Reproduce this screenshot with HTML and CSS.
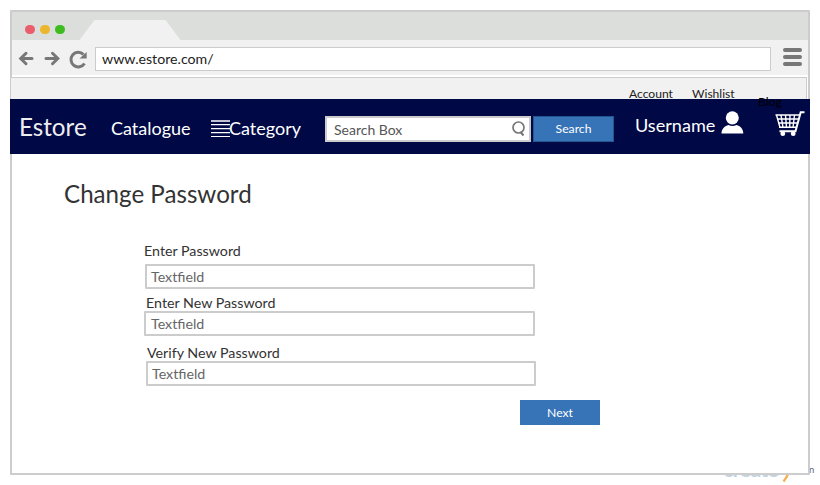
FILE: index.html
```html
<!DOCTYPE html>
<html lang="en">
<head>
<meta charset="utf-8">
<title>Estore - Change Password</title>
<link rel="stylesheet" href="styles.css">
</head>
<body>
<div class="watermark"><span class="mark-blue">create</span><svg class="mark-tail" width="10" height="9" viewBox="0 0 10 9"><path d="M7.500 0Q5.500 5 2.500 8.500" fill="none" stroke="#f9b054" stroke-width="2.400"/></svg></div>
<div class="watermark-domain">n</div>
<div class="window">
  <div class="titlebar">
    <div class="dots"><i class="dot red"></i><i class="dot amber"></i><i class="dot green"></i></div>
    <div class="tab"></div>
  </div>
  <div class="toolbar">
    <svg class="tools" width="72" height="24" viewBox="0 0 72 24" fill="none" stroke="#777" stroke-width="3">
      <path d="M3 11.500H14M8 6.300L2.700 11.500L8 16.700" stroke-linecap="round"/>
      <path d="M28 11.500H39M34.500 6.300L39.800 11.500L34.500 16.700" stroke-linecap="round"/>
      <path d="M66.500 16.500A7.300 7.300 0 1 1 65.500 7.500"/>
      <path d="M68.700 5V11.500H61.500Z" fill="#777" stroke="none"/>
    </svg>
    <div class="address">www.estore.com/</div>
    <div class="menu"><i></i><i></i><i></i></div>
  </div>
  <div class="links"><span class="account">Account</span><span class="wishlist">Wishlist</span><span class="blog">Blog</span></div>
  <nav class="nav">
    <span class="brand">Estore</span>
    <span class="catalogue">Catalogue</span>
    <svg class="lines" width="19" height="18" viewBox="0 0 19 18" fill="#fff">
      <path d="M0 -1H19V1H0Z" opacity=".75"/><path d="M0 3H19V4H0ZM0 7H19V8H0ZM0 11H19V12H0ZM0 15H19V16H0Z"/><path d="M0 4H19V5H0ZM0 8H19V9H0ZM0 12H19V13H0Z" opacity=".25"/>
    </svg>
    <span class="category">Category</span>
    <div class="search"><span>Search Box</span>
      <svg width="14" height="16" viewBox="0 0 14 16" fill="none" stroke="#777"><circle cx="6.500" cy="6.500" r="5.500" stroke-width="1.700"/><path d="M8.500 11L11.500 14.500" stroke-width="2"/></svg>
    </div>
    <div class="search-button">Search</div>
    <span class="username">Username</span>
    <svg class="user" width="23" height="23" viewBox="0 0 23 23" fill="#fff"><ellipse cx="11.300" cy="6.800" rx="6.500" ry="6.600"/><path d="M.5 22.500C.5 17.500 4 15 7.500 14Q11.500 16 15.500 14C19 15 22.300 17.500 22.300 22.500Z"/></svg>
    <svg class="cart" width="30" height="26" viewBox="0 0 30 26" fill="none" stroke="#fff">
      <path d="M29.500 1.200H25.700L20.500 20.200H4.500" stroke-width="2"/>
      <path d="M.5 4H24.500M2 8H23.500M3 12H22.500M4 16.200H21.500" stroke-width="1.500"/>
      <path d="M1.500 4L5 16.500M6 4L8 16.500M10.500 4L11.500 16.500M15 4L14.700 16.500M19.500 4L18 16.500" stroke-width="1.400"/>
      <g fill="#fff" stroke="none"><circle cx="7.800" cy="22.700" r="2.400"/><circle cx="18.200" cy="22.700" r="2.400"/></g>
    </svg>
  </nav>
  <main>
    <h1>Change Password</h1>
    <div class="field first"><label>Enter Password</label><div class="input">Textfield</div></div>
    <div class="field second"><label>Enter New Password</label><div class="input">Textfield</div></div>
    <div class="field third"><label>Verify New Password</label><div class="input">Textfield</div></div>
    <div class="next">Next</div>
  </main>
</div>
</body>
</html>
```
FILE: styles.css
```css
* { box-sizing: border-box; }
body { margin: 0; width: 820px; height: 485px; padding: 10px; background: #fff; overflow: hidden; font-family: Lato, sans-serif; color: #333; white-space: nowrap; }
.window { position: relative; z-index: 1; width: 800px; height: 465px; border: 2px solid #cbcccb; border-radius: 1px; background: #fff; }
.titlebar { display: flex; height: 28px; background: #dcdedb; padding-left: 13px; }
.dots { display: flex; gap: 5.500px; width: 54.500px; padding-top: 12.500px; }
.dot { width: 9.500px; height: 9.500px; border-radius: 50%; }
.red { background: #eb5d6c; }
.amber { background: #ebb62d; }
.green { background: #3cbc1f; }
.tab { width: 101px; height: 20px; margin-top: 8px; background: #f1f1f1; clip-path: polygon(15px 0, 86px 0, 100% 100%, 0 100%); }
.toolbar { display: flex; height: 35px; background: #f1f1f1; padding: 7px 0 0 6px; }
.tools { width: 72px; margin: 0 5px 0 0; }
svg { display: block; flex: none; overflow: visible; }
.address { width: 676px; height: 24px; border: 1px solid #cbcccb; background: #fff; color: #222; font-size: 14.200px; line-height: 22px; padding-left: 6px; }
.menu { width: 19px; margin: 1px 0 0 12px; display: flex; flex-direction: column; gap: 3px; }
.menu i { height: 4px; border-radius: 2px; background: #777; }
.links { display: flex; width: 797px; height: 22px; margin: 2px 0 0 -2px; border: 1px solid #cbcccb; border-bottom: 0; background: #f1f1f1; color: #222; font-size: 12.100px; line-height: 16px; padding: 8px 0 0 618px; position: relative; z-index: 2; }
.account { width: 63px; }
.wishlist { width: 66px; }
.blog { padding-top: 8px; color: #000; }
.nav { display: flex; width: 800px; height: 55px; margin-left: -2px; background: #000846; color: #fff; font-size: 18px; }
.brand { width: 92px; padding-left: 9px; font-size: 24.200px; line-height: 56px; color: #eee; }
.catalogue { width: 109px; padding-left: 9px; line-height: 58px; }
.lines { margin-top: 22px; }
.category { width: 96px; margin-left: -1px; line-height: 58px; }
.search { display: flex; justify-content: space-between; width: 206px; height: 26px; margin-top: 17px; border: 2px solid #cbcccb; background: #fff; color: #555; font-size: 14px; line-height: 23px; padding: 0 3px 0 7px; }
.search svg { margin-top: 3px; }
.search-button { width: 81px; height: 26px; margin: 17px 0 0 2px; border: 1px solid #23558f; background: #3673b7; font-size: 12.200px; line-height: 23px; text-align: center; }
.username { width: 86px; margin-left: 21px; font-size: 18.100px; line-height: 52px; }
.user { margin-top: 12px; }
.cart { margin: 12px 0 0 31px; }
h1 { margin: 0; padding: 24px 0 0 52px; font-size: 24.150px; font-weight: 400; line-height: 31px; }
.field { width: 391px; margin-left: 132px; font-size: 14.250px; }
.field label { display: block; height: 18px; line-height: 18px; }
.input { width: 390px; height: 25px; border: 2px solid #cbcccb; border-radius: 1px; line-height: 22px; color: #666; padding-left: 4px; }
.first { margin-top: 33px; }
.first .input { margin: 4px 0 0 1px; }
.second { margin-top: 5px; }
.second label { padding-left: 2px; height: 17px; }
.second .input { width: 391px; padding-left: 5px; }
.third { margin-top: 8px; }
.third label { padding-left: 3px; height: 17px; }
.third .input { margin-left: 2px; }
.next { width: 80px; height: 25px; margin: 14px 0 0 508px; background: #3673b7; color: #fff; font-size: 12.200px; line-height: 25px; text-align: center; }
.watermark { position: absolute; left: 723px; top: 455px; font-size: 22px; line-height: 28px; font-weight: 700; letter-spacing: -1px; color: #c3d3df; }
.mark-tail { position: absolute; left: 58px; top: 18px; }
.watermark-domain { position: absolute; left: 809px; top: 464px; font-size: 9.500px; line-height: 12px; color: #666; }
```
